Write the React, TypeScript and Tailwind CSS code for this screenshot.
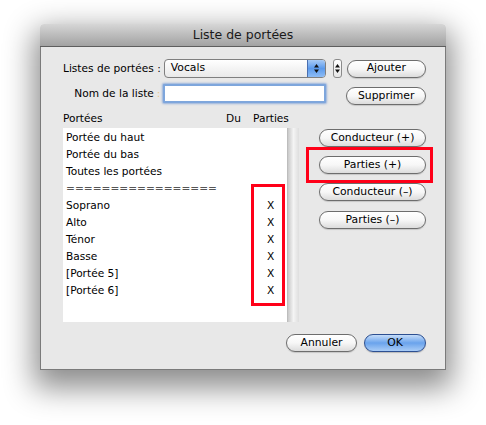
import React from "react";

const font = { fontFamily: '"DejaVu Sans", "Liberation Sans", sans-serif' };

function PillButton({ label, className = "" }: { label: string; className?: string }) {
  return (
    <div
      className={
        "flex items-center justify-center h-[18px] rounded-full border border-[#6d6d6d] bg-gradient-to-b from-white via-[#f7f7f7] to-[#dcdcdc] text-[10.8px] text-black whitespace-nowrap shadow-[0_1px_1px_rgba(0,0,0,0.15)] " +
        className
      }
    >
      {label}
    </div>
  );
}

function UpDown() {
  return (
    <svg width="7" height="11" viewBox="0 0 7 11">
      <polygon points="3.5,1 6,4.5 1,4.5" fill="#111" />
      <polygon points="3.5,10 6,6.5 1,6.5" fill="#111" />
    </svg>
  );
}

const rows = [
  { name: "Portée du haut", x: false },
  { name: "Portée du bas", x: false },
  { name: "Toutes les portées", x: false },
  { name: "=================", x: false, sep: true },
  { name: "Soprano", x: true },
  { name: "Alto", x: true },
  { name: "Ténor", x: true },
  { name: "Basse", x: true },
  { name: "[Portée 5]", x: true },
  { name: "[Portée 6]", x: true },
];

export default function App() {
  return (
    <div className="w-[486px] h-[425px] bg-white pt-[24px] pl-[40px]" style={font}>
      <div className="w-[406px] h-[346px] flex flex-col rounded-t-[4px] shadow-[0_12px_30px_6px_rgba(0,0,0,0.45)]">
        {/* title bar */}
        <div className="h-[23px] flex items-center justify-center rounded-t-[4px] border-b border-[#5e5e5e] bg-gradient-to-b from-[#d6d6d6] to-[#a2a2a2] text-[12.5px] text-[#1a1a1a]">
          Liste de portées
        </div>

        <div className="flex-1 flex flex-col bg-[#e8e8e8] pl-[22px] pr-[19px] pt-[12px] border-x border-b border-[#7a7a7a]">
          {/* row 1 */}
          <div className="flex items-center h-[19px]">
            <div className="w-[98px] text-right text-[10.6px] text-black whitespace-nowrap">Listes de portées :</div>
            <div className="ml-[3px] w-[163px] h-[19px] flex rounded-[4px] border border-[#7f7f7f] bg-gradient-to-b from-white to-[#e9e9e9] overflow-hidden">
              <div className="flex-1 flex items-center pl-[6px] text-[10.8px] text-black">Vocals</div>
              <div className="w-[18px] flex items-center justify-center bg-gradient-to-b from-[#a9cbf5] via-[#5b9aec] to-[#8dbcf5] border-l border-[#4a6fb0]">
                <UpDown />
              </div>
            </div>
            <div className="ml-[7px] w-[9px] h-[19px] flex items-center justify-center rounded-[3px] border border-[#8a8a8a] bg-gradient-to-b from-white to-[#e6e6e6]">
              <UpDown />
            </div>
            <PillButton label="Ajouter" className="ml-[5px] w-[80px]" />
          </div>

          {/* row 2 */}
          <div className="flex items-start mt-[6px] h-[21px]">
            <div className="w-[98px] h-[19px] flex items-center justify-end text-[10.6px] text-black whitespace-nowrap">
              Nom de la liste<span className="text-[#e8c98c] ml-[3px]">:</span>
            </div>
            <div className="ml-[3px] w-[164px] h-[19px] bg-white border-2 border-[#7ea6dc] shadow-[0_0_2px_1px_rgba(96,140,210,0.6)] rounded-[1px]" />
            <PillButton label="Supprimer" className="ml-[20px] mt-[3px] w-[80px]" />
          </div>

          {/* headers */}
          <div className="flex items-center h-[16px] mt-[6px] text-[10.6px] text-black">
            <div className="w-[163px]">Portées</div>
            <div className="w-[27px]">Du</div>
            <div>Parties</div>
          </div>

          {/* list + buttons */}
          <div className="flex mt-[1px]">
            <div className="relative flex w-[238px] h-[194px]">
              <div className="flex-1 bg-white pt-[1px]">
                {rows.map((r) => (
                  <div key={r.name} className="flex items-center h-[17px] pl-[3px] text-[10.6px]">
                    <div className={"w-[201px] " + (r.sep ? "text-[#555]" : "text-black")}>{r.name}</div>
                    <div className="text-black">{r.x ? "X" : ""}</div>
                  </div>
                ))}
              </div>
              <div className="w-[12px] bg-gradient-to-r from-[#c9c9c9] via-[#f4f4f4] to-[#dedede] border-l border-[#bdbdbd]" />
              <div className="absolute left-[188px] top-[56px] w-[34px] h-[122px] border-[3px] border-[#ff0018]" />
            </div>

            <div className="ml-[20px] flex flex-col w-[107px] pt-[1px]">
              <PillButton label="Conducteur (+)" className="w-[107px]" />
              <div className="relative mt-[9px]">
                <PillButton label="Parties (+)" className="w-[107px]" />
                <div className="absolute left-[-13px] top-[-9px] w-[127px] h-[36px] border-[3px] border-[#ff0018]" />
              </div>
              <PillButton label="Conducteur (–)" className="w-[107px] mt-[9px]" />
              <PillButton label="Parties (–)" className="w-[107px] mt-[10px]" />
            </div>
          </div>

          {/* bottom buttons */}
          <div className="flex justify-end mt-[12px]">
            <PillButton label="Annuler" className="w-[71px]" />
            <div className="ml-[7px] w-[62px] h-[18px] flex items-center justify-center rounded-full border border-[#2c4f91] bg-gradient-to-b from-[#c5dcf8] via-[#6aa3ec] to-[#a9ccf6] text-[10.8px] text-black shadow-[0_1px_1px_rgba(0,0,0,0.2)]">
              OK
            </div>
          </div>
        </div>
      </div>
    </div>
  );
}
